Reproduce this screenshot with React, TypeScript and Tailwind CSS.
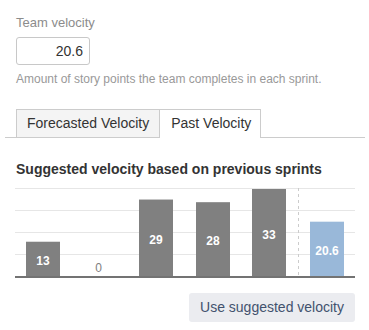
import React from 'react';

const bars = [
  { x: 11, value: 13 },
  { x: 67.5, value: 0 },
  { x: 124, value: 29 },
  { x: 181, value: 28 },
  { x: 237, value: 33 },
];
const suggested = { x: 295, value: 20.6 };

const BASE = 90;
const SCALE = 87 / 33;

function VelocityChart() {
  const grid = [2, 24, 46, 68];
  return (
    <svg width={340} height={94} className="block">
      {grid.map(y => (
        <line key={y} x1={0} x2={340} y1={y + 0.5} y2={y + 0.5} stroke="#e6e6e6" strokeWidth={1} />
      ))}
      <line x1={283.5} x2={283.5} y1={2} y2={BASE} stroke="#cccccc" strokeWidth={1} strokeDasharray="3 3" />
      {bars.map((b, i) => {
        const h = b.value * SCALE;
        if (b.value === 0) {
          return (
            <text key={i} x={b.x + 16} y={BASE - 8} textAnchor="middle" dominantBaseline="central" fontSize={12} fill="#808080">
              0
            </text>
          );
        }
        return (
          <g key={i}>
            <rect x={b.x} y={BASE - h} width={34} height={h} fill="#808080" />
            <text x={b.x + 17} y={BASE - h / 2 + 2} textAnchor="middle" dominantBaseline="central" fontSize={12} fontWeight={700} fill="#ffffff">
              {b.value}
            </text>
          </g>
        );
      })}
      <rect x={suggested.x} y={BASE - suggested.value * SCALE} width={34} height={suggested.value * SCALE} fill="#99b8d9" />
      <text x={suggested.x + 17} y={BASE - (suggested.value * SCALE) / 2 + 2} textAnchor="middle" dominantBaseline="central" fontSize={12} fontWeight={700} fill="#ffffff">
        {suggested.value}
      </text>
      <rect x={0} y={BASE} width={340} height={2} fill="#737373" />
    </svg>
  );
}

export default function App() {
  return (
    <div className="w-[369px] h-[330px] overflow-hidden bg-white pl-4 pr-[14px] font-['Liberation_Sans',Arial,sans-serif]">
      <div className="pt-[14px] text-[13px] leading-[18px] text-[#8c8c8c]">Team velocity</div>
      <input
        readOnly
        value="20.6"
        className="mt-[5px] block h-[28px] w-[74px] rounded-[3px] border border-[#c8c8c8] pr-[6px] text-right text-[14px] text-[#333]"
      />
      <p className="mt-[6px] text-[12px] leading-[16px] text-[#999]">
        Amount of story points the team completes in each sprint.
      </p>

      <div className="mt-[22px] -ml-[11px] -mr-[10px] flex border-b border-[#cccccc] pl-[11px]">
        <div className="flex h-[28px] items-center border border-b-0 border-[#cccccc] bg-[#f4f4f4] px-[10px] text-[14px] text-[#333]">
          Forecasted Velocity
        </div>
        <div className="-mb-px flex h-[29px] items-center border border-l-0 border-b-0 border-[#cccccc] bg-white pl-[11px] pr-[9px] pb-px text-[14px] text-[#333]">
          Past Velocity
        </div>
      </div>

      <h3 className="mt-[21px] text-[14px] font-bold leading-[20px] text-[#333]">
        Suggested velocity based on previous sprints
      </h3>

      <div className="mt-[7px] -ml-px">
        <VelocityChart />
      </div>

      <div className="mt-[13px] flex justify-end">
        <button className="h-[29px] rounded-[3px] bg-[#ebecf0] px-[11px] text-[14px] text-[#42526e]">
          Use suggested velocity
        </button>
      </div>
    </div>
  );
}
